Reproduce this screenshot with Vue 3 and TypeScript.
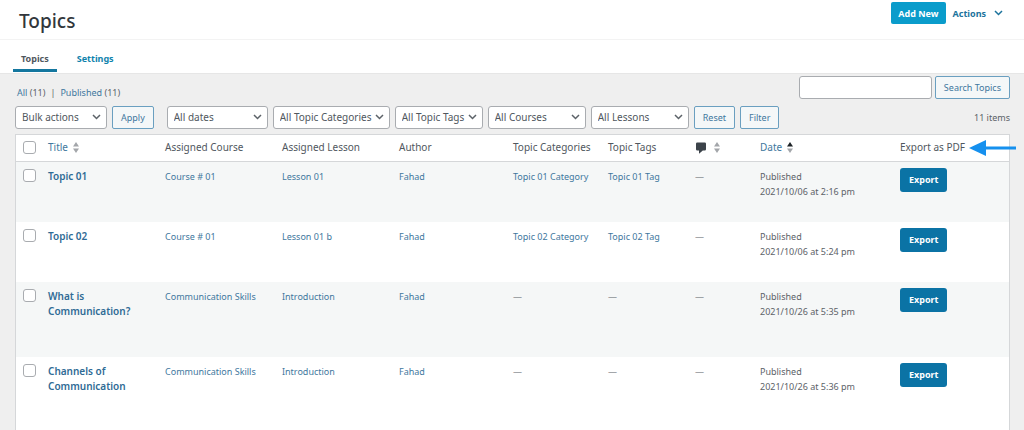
<script setup lang="ts">
import { ref } from 'vue'

interface Topic {
  id: number
  title: string
  course: string
  lesson: string
  author: string
  category: string
  tag: string
  date: string
}

interface Filter {
  id: string
  label: string
}

const topics: Topic[] = [
  { id: 1, title: 'Topic 01', course: 'Course # 01', lesson: 'Lesson 01', author: 'Fahad', category: 'Topic 01 Category', tag: 'Topic 01 Tag', date: '2021/10/06 at 2:16 pm' },
  { id: 2, title: 'Topic 02', course: 'Course # 01', lesson: 'Lesson 01 b', author: 'Fahad', category: 'Topic 02 Category', tag: 'Topic 02 Tag', date: '2021/10/06 at 5:24 pm' },
  { id: 3, title: 'What is Communication?', course: 'Communication Skills', lesson: 'Introduction', author: 'Fahad', category: '', tag: '', date: '2021/10/26 at 5:35 pm' },
  { id: 4, title: 'Channels of Communication', course: 'Communication Skills', lesson: 'Introduction', author: 'Fahad', category: '', tag: '', date: '2021/10/26 at 5:36 pm' },
]

const filters: Filter[] = [
  { id: 'dates', label: 'All dates' },
  { id: 'categories', label: 'All Topic Categories' },
  { id: 'tags', label: 'All Topic Tags' },
  { id: 'courses', label: 'All Courses' },
  { id: 'lessons', label: 'All Lessons' },
]

const selected = ref<number[]>([])
const query = ref('')

function toggleAll(event: Event) {
  const checked = (event.target as HTMLInputElement).checked
  selected.value = checked ? topics.map((topic) => topic.id) : []
}
</script>

<template>
  <div class="page">
    <header class="header">
      <h1>Topics</h1>
      <div class="header-actions">
        <button type="button" class="add-new">Add New</button>
        <button type="button" class="actions">
          Actions
          <svg width="9" height="6" viewBox="0 0 9 6" aria-hidden="true"><path d="M1 1 L4.5 4.5 L8 1" /></svg>
        </button>
      </div>
    </header>

    <nav class="tabs">
      <a href="#topics" class="tab current">Topics</a>
      <a href="#settings" class="tab">Settings</a>
    </nav>

    <main class="content">
      <div class="top-row">
        <p class="views">
          <a href="#all">All</a> (11)<span class="bar">|</span><a href="#published">Published</a> (11)
        </p>
        <form class="search" @submit.prevent>
          <input v-model="query" type="search" aria-label="Search Topics" />
          <button type="submit" class="outline">Search Topics</button>
        </form>
      </div>

      <div class="filters">
        <div class="select bulk">
          <select aria-label="Select bulk action"><option>Bulk actions</option></select>
          <svg width="9" height="6" viewBox="0 0 9 6" aria-hidden="true"><path d="M1 1 L4.5 4.5 L8 1" /></svg>
        </div>
        <button type="button" class="outline apply">Apply</button>
        <div v-for="filter in filters" :key="filter.id" class="select" :class="filter.id">
          <select :aria-label="filter.label"><option>{{ filter.label }}</option></select>
          <svg width="9" height="6" viewBox="0 0 9 6" aria-hidden="true"><path d="M1 1 L4.5 4.5 L8 1" /></svg>
        </div>
        <button type="button" class="outline">Reset</button>
        <button type="button" class="outline">Filter</button>
        <span class="count">11 items</span>
      </div>

      <div class="table-wrap">
        <table>
          <colgroup>
            <col class="c-check" />
            <col class="c-text" />
            <col class="c-text" />
            <col class="c-text" />
            <col class="c-author" />
            <col class="c-cats" />
            <col class="c-tags" />
            <col class="c-comments" />
            <col class="c-date" />
            <col class="c-export" />
          </colgroup>
          <thead>
            <tr>
              <th class="check">
                <input type="checkbox" aria-label="Select all" :checked="selected.length === topics.length" @change="toggleAll" />
              </th>
              <th>
                <a href="#sort-title" class="sort">Title
                  <svg width="6" height="11" viewBox="0 0 6 11" aria-hidden="true"><path d="M3 0 L6 4.5 H0 Z M0 6.5 H6 L3 11 Z" /></svg>
                </a>
              </th>
              <th>Assigned Course</th>
              <th>Assigned Lesson</th>
              <th>Author</th>
              <th>Topic Categories</th>
              <th>Topic Tags</th>
              <th>
                <a href="#sort-comments" class="sort comments" aria-label="Comments">
                  <svg class="bubble" width="12" height="12" viewBox="0 0 12 12" aria-hidden="true"><path d="M2.2 0.5 H9.8 Q11 0.5 11 1.7 V7.3 Q11 8.5 9.8 8.5 H7.8 L4 11.8 V8.5 H2.2 Q1 8.5 1 7.3 V1.7 Q1 0.5 2.2 0.5 Z" /></svg>
                  <svg width="6" height="11" viewBox="0 0 6 11" aria-hidden="true"><path d="M3 0 L6 4.5 H0 Z M0 6.5 H6 L3 11 Z" /></svg>
                </a>
              </th>
              <th>
                <a href="#sort-date" class="sort">Date
                  <svg width="6" height="11" viewBox="0 0 6 11" aria-hidden="true"><path class="active" d="M3 0 L6 4.5 H0 Z" /><path d="M0 6.5 H6 L3 11 Z" /></svg>
                </a>
              </th>
              <th>Export as PDF</th>
            </tr>
          </thead>
          <tbody>
            <tr v-for="topic in topics" :key="topic.id">
              <td class="check"><input v-model="selected" type="checkbox" :value="topic.id" :aria-label="`Select ${topic.title}`" /></td>
              <td class="title"><a href="#edit">{{ topic.title }}</a></td>
              <td><a href="#course">{{ topic.course }}</a></td>
              <td><a href="#lesson">{{ topic.lesson }}</a></td>
              <td><a href="#author">{{ topic.author }}</a></td>
              <td><a v-if="topic.category" href="#category">{{ topic.category }}</a><template v-else>—</template></td>
              <td><a v-if="topic.tag" href="#tag">{{ topic.tag }}</a><template v-else>—</template></td>
              <td>—</td>
              <td>Published<br />{{ topic.date }}</td>
              <td class="export-cell"><button type="button" class="export">Export</button></td>
            </tr>
          </tbody>
        </table>
        <svg class="arrow" width="48" height="18" viewBox="0 0 48 18" aria-hidden="true">
          <path d="M0 9 L17 1 V7.5 H47 V10.5 H17 V17 Z" />
        </svg>
      </div>
    </main>
  </div>
</template>

<style>
body {
  margin: 0;
  background: #efefef;
}
</style>

<style scoped>
.page {
  height: 100vh;
  overflow: hidden;
  display: flex;
  flex-direction: column;
  background: #efefef;
  color: #5c6268;
  font-family: "Noto Sans", "Open Sans", sans-serif;
  font-size: 9px;
  line-height: 15px;
}
.page * {
  box-sizing: border-box;
}
a {
  color: #41789e;
  text-decoration: none;
}
button,
input,
select {
  font: inherit;
  margin: 0;
}
.header {
  flex: none;
  display: flex;
  justify-content: space-between;
  align-items: flex-start;
  height: 39px;
  padding: 2px 21px 0 19px;
  background: #fff;
}
h1 {
  margin: 6px 0 0;
  color: #32373c;
  font-size: 19px;
  line-height: 26px;
  font-weight: 500;
}
.header-actions {
  display: flex;
  align-items: center;
  gap: 7px;
}
.add-new {
  height: 22px;
  padding: 0 7px;
  border: 0;
  border-radius: 2px;
  background: #0a9ccb;
  color: #fff;
  font-weight: 700;
}
.actions {
  display: flex;
  align-items: center;
  gap: 8px;
  padding: 0;
  border: 0;
  background: none;
  color: #1c739c;
  font-weight: 700;
}
svg {
  flex: none;
}
.actions svg,
.select svg {
  fill: none;
  stroke: currentColor;
  stroke-width: 1.5;
}
.tabs {
  flex: none;
  display: flex;
  gap: 12px;
  height: 35px;
  padding: 0 13px;
  border-top: 1px solid #f3f3f3;
  border-bottom: 1px solid #e6e6e6;
  background: #fff;
}
.tab {
  height: 32px;
  padding: 11px 8px 0;
  color: #0f82ac;
  font-weight: 700;
}
.tab.current {
  border-bottom: 3px solid #14779f;
  color: #50575e;
}
.content {
  flex: 1;
  display: flex;
  flex-direction: column;
  min-height: 0;
  padding: 2px 14px 0 15px;
}
.top-row {
  display: flex;
  justify-content: space-between;
  align-items: flex-start;
}
.views {
  margin: 9px 0 0 2px;
}
.bar {
  margin: 0 5px;
}
.search {
  display: flex;
  gap: 3px;
}
.search input {
  width: 133px;
  height: 23px;
  padding: 0 6px;
  border: 1px solid #a9acb0;
  border-radius: 3px;
  background: #fff;
}
.outline {
  height: 23px;
  padding: 0 8px;
  border: 1px solid #6a9fc0;
  border-radius: 2px;
  background: #f4f7f8;
  color: #41789e;
  white-space: nowrap;
}
.filters {
  display: flex;
  align-items: center;
  gap: 5px;
  margin-top: 6px;
}
.select {
  position: relative;
  width: 98px;
  height: 23px;
}
.select.bulk {
  width: 92px;
}
.select.dates {
  width: 101px;
}
.select.categories {
  width: 117px;
}
.select.tags {
  width: 88px;
}
.filters .apply {
  margin-right: 8px;
}
select {
  appearance: none;
  width: 100%;
  height: 100%;
  padding: 0 0 0 6px;
  border: 1px solid #a9acb0;
  border-radius: 3px;
  background: #fff;
  color: #50575e;
  font-size: 10px;
}
.select svg {
  position: absolute;
  top: 8px;
  right: 6px;
  pointer-events: none;
}
.count {
  margin-left: auto;
}
.table-wrap {
  position: relative;
  flex: 1;
  margin-top: 5px;
  border: 1px solid #d5d7d9;
  border-bottom: 0;
  background: #fff;
}
table {
  width: 100%;
  table-layout: fixed;
  border-collapse: collapse;
}
.c-check { width: 32px; }
.c-text { width: 117px; }
.c-author { width: 114px; }
.c-cats { width: 95px; }
.c-tags { width: 87px; }
.c-comments { width: 65px; }
.c-date { width: 140px; }
.c-export { width: 109px; }
th {
  height: 26px;
  padding: 0;
  border-bottom: 1px solid #d5d7d9;
  color: #50575e;
  font-size: 10px;
  font-weight: 400;
  text-align: left;
  white-space: nowrap;
}
.sort {
  display: flex;
  align-items: center;
  gap: 5px;
}
.sort.comments {
  gap: 7px;
}
.sort svg {
  fill: #a3a6aa;
}
.sort .active {
  fill: #1d2327;
}
.sort .bubble {
  fill: #3c434a;
}
td {
  height: 60px;
  padding: 7px 8px 23px 0;
  vertical-align: top;
}
tbody tr:nth-child(odd) {
  background: #f5f7f7;
}
.title {
  padding-bottom: 38px;
  padding-right: 24px;
  font-size: 10px;
  font-weight: 600;
}
.title a {
  color: #2f6b95;
}
.check {
  padding-left: 7px;
}
input[type="checkbox"] {
  appearance: none;
  display: block;
  width: 13px;
  height: 13px;
  border: 1px solid #a9acb0;
  border-radius: 3px;
  background: #fff;
}
input[type="checkbox"]:checked {
  background: #0b73a5;
}
.export-cell {
  padding-top: 6px;
}
.export {
  display: block;
  height: 24px;
  padding: 0 9px;
  border: 0;
  border-radius: 3px;
  background: #0b73a5;
  color: #fff;
  font-weight: 700;
}
.arrow {
  position: absolute;
  top: 4px;
  right: -8px;
  fill: #1590ee;
}
</style>
